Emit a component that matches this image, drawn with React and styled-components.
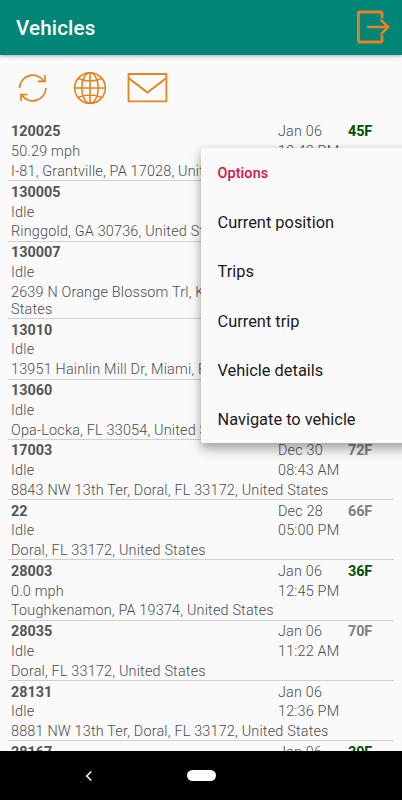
import React from 'react';
import styled, {createGlobalStyle} from 'styled-components';

const GlobalStyle = createGlobalStyle`
    * {
        box-sizing: border-box;
    }

    body {
        margin: 0;
        background: #fafafa;
        font-family: Roboto, sans-serif;
    }
`

const Container = styled.div`
    position: relative;
    display: flex;
    flex-direction: column;
    height: 800px;
    width: 402px;
    overflow: hidden;
    background: #fafafa;
`

const Header = styled.header`
    display: flex;
    flex: none;
    align-items: center;
    justify-content: space-between;
    height: 55px;
    padding: 0 12px 0 16px;
    background: #008577;
    box-shadow: 0 1px 4px rgba(0, 0, 0, 0.32);
`

const Title = styled.h1`
    margin: 0;
    color: #fff;
    font-size: 20.6px;
    font-weight: 500;
    letter-spacing: 0.15px;
    line-height: 24px;
`

const Toolbar = styled.div`
    display: flex;
    flex: none;
    height: 66.1px;
    padding: 16px 0 0 18px;
`

const Icon = styled.svg`
    display: block;
    flex: none;
    fill: none;
    stroke: #e8821e;
    margin-left: ${props => props.$gap || 0}px;
`

const List = styled.main`
    flex: 1;
    min-height: 0;
    padding: 0 8px;
    overflow: hidden;
`

const Row = styled.div`
    display: grid;
    grid-template-columns: 267px 70px 1fr;
    row-gap: 2.6px;
    padding: 2.4px 0 0.14px 3px;
    border-bottom: 1px solid #d0d0d0;
    color: #4c4c4c;
    font-size: 14.4px;
    font-weight: 300;
    letter-spacing: 0.19px;
    line-height: 17.2px;
`

const Name = styled.div`
    color: #555;
    font-weight: 700;
    letter-spacing: 0;
`

const Cell = styled.div`
    white-space: nowrap;
`

const Temp = styled.div`
    color: ${props => props.$active ? '#005000' : '#808080'};
    font-weight: 700;
    letter-spacing: -0.1px;
`

const Status = styled.div`
    grid-column: 1;
`

const Time = styled.div`
    grid-column: 2 / 4;
`

const Address = styled.div`
    grid-column: 1 / 4;
    white-space: pre-line;
`

const Menu = styled.div`
    position: absolute;
    top: 148px;
    left: 201px;
    width: 210px;
    height: 295px;
    border-radius: 2px;
    background: #fafafa;
    box-shadow: 0 7px 12px rgba(0, 0, 0, 0.28), 0 1px 8px rgba(0, 0, 0, 0.14);
`

const MenuTitle = styled.div`
    height: 50.2px;
    padding: 1px 0 0 16.5px;
    color: #d8123f;
    font-size: 14.4px;
    font-weight: 500;
    letter-spacing: 0.1px;
    line-height: 50.2px;
`

const MenuItem = styled.div`
    height: 49.2px;
    padding-left: 16.5px;
    color: #1a1a1a;
    font-size: 16.4px;
    line-height: 49.2px;
`

const NavBar = styled.footer`
    display: grid;
    grid-template-columns: 1fr 28px 1fr;
    align-items: center;
    flex: none;
    height: 49px;
    background: #000;
`

const HomePill = styled.div`
    height: 11px;
    width: 29px;
    border-radius: 6px;
    background: #fff;
`

const BackIcon = styled.svg`
    display: block;
    margin-left: 85px;
    fill: none;
    stroke: #fff;
    stroke-width: 1.6;
`

const vehicles = [
    {name: '120025', status: '50.29 mph', date: 'Jan 06', time: '12:42 PM', temp: '45F', active: true, address: 'I-81, Grantville, PA 17028, United States'},
    {name: '130005', status: 'Idle', address: 'Ringgold, GA 30736, United States'},
    {name: '130007', status: 'Idle', address: '2639 N Orange Blossom Trl, Kissimmee, FL 34744, United\nStates'},
    {name: '13010', status: 'Idle', address: '13951 Hainlin Mill Dr, Miami, FL 33177, United States'},
    {name: '13060', status: 'Idle', address: 'Opa-Locka, FL 33054, United States'},
    {name: '17003', status: 'Idle', date: 'Dec 30', time: '08:43 AM', temp: '72F', address: '8843 NW 13th Ter, Doral, FL 33172, United States'},
    {name: '22', status: 'Idle', date: 'Dec 28', time: '05:00 PM', temp: '66F', address: 'Doral, FL 33172, United States'},
    {name: '28003', status: '0.0 mph', date: 'Jan 06', time: '12:45 PM', temp: '36F', active: true, address: 'Toughkenamon, PA 19374, United States'},
    {name: '28035', status: 'Idle', date: 'Jan 06', time: '11:22 AM', temp: '70F', address: 'Doral, FL 33172, United States'},
    {name: '28131', status: 'Idle', date: 'Jan 06', time: '12:36 PM', address: '8881 NW 13th Ter, Doral, FL 33172, United States'},
    {name: '28167', date: 'Jan 06', temp: '39F', active: true},
]

const options = ['Current position', 'Trips', 'Current trip', 'Vehicle details', 'Navigate to vehicle']

const App = () => {
    return (
        <Container>
            <GlobalStyle />
            <Header>
                <Title>Vehicles</Title>
                <Icon width="34" height="36" viewBox="0 0 34 36" strokeWidth="2.8">
                    <path d="M26 8.3V3Q26 2 25 2H3.4Q2.4 2 2.4 3V31Q2.4 32 3.4 32H25Q26 32 26 31V25.3" />
                    <path d="M11 17H32M24.7 9.6L32.2 17L24.7 24.4" strokeWidth="2.7" />
                </Icon>
            </Header>
            <Toolbar>
                <Icon width="30" height="34" viewBox="0 0 30 34" strokeWidth="1.7">
                    <path d="M1.5 17A13.3 13.3 0 0 1 26 10.3M27 4V10.3H19.5" />
                    <path d="M28 17A13.3 13.3 0 0 1 3.5 23.7M3 30V23.5H9.5" />
                </Icon>
                <Icon $gap={25} width="34" height="34" viewBox="0 0 34 34" strokeWidth="1.6">
                    <circle cx="17" cy="17" r="15.3" />
                    <ellipse cx="17" cy="17" rx="8.2" ry="15.3" />
                    <path d="M17 1.7V32.3M1.7 17H32.3M5 7.5Q17 12.5 29 7.5M5 26.5Q17 21.5 29 26.5" />
                </Icon>
                <Icon $gap={20} width="42" height="34" viewBox="0 0 42 34" strokeWidth="1.8">
                    <path d="M1.5 3H39.4V30.3H1.5ZM1.5 7L20.4 21.5L39.4 7" />
                </Icon>
            </Toolbar>
            <List>
                {vehicles.map(vehicle => (
                    <Row key={vehicle.name}>
                        <Name>{vehicle.name}</Name>
                        <Cell>{vehicle.date}</Cell>
                        <Temp $active={vehicle.active}>{vehicle.temp}</Temp>
                        <Status>{vehicle.status}</Status>
                        <Time>{vehicle.time}</Time>
                        <Address>{vehicle.address}</Address>
                    </Row>
                ))}
            </List>
            <NavBar>
                <BackIcon width="8" height="12" viewBox="0 0 8 12">
                    <path d="M6.3 1.5L1.8 6L6.3 10.5" />
                </BackIcon>
                <HomePill />
            </NavBar>
            <Menu>
                <MenuTitle>Options</MenuTitle>
                {options.map(option => <MenuItem key={option}>{option}</MenuItem>)}
            </Menu>
        </Container>
    )
}

export default App;
